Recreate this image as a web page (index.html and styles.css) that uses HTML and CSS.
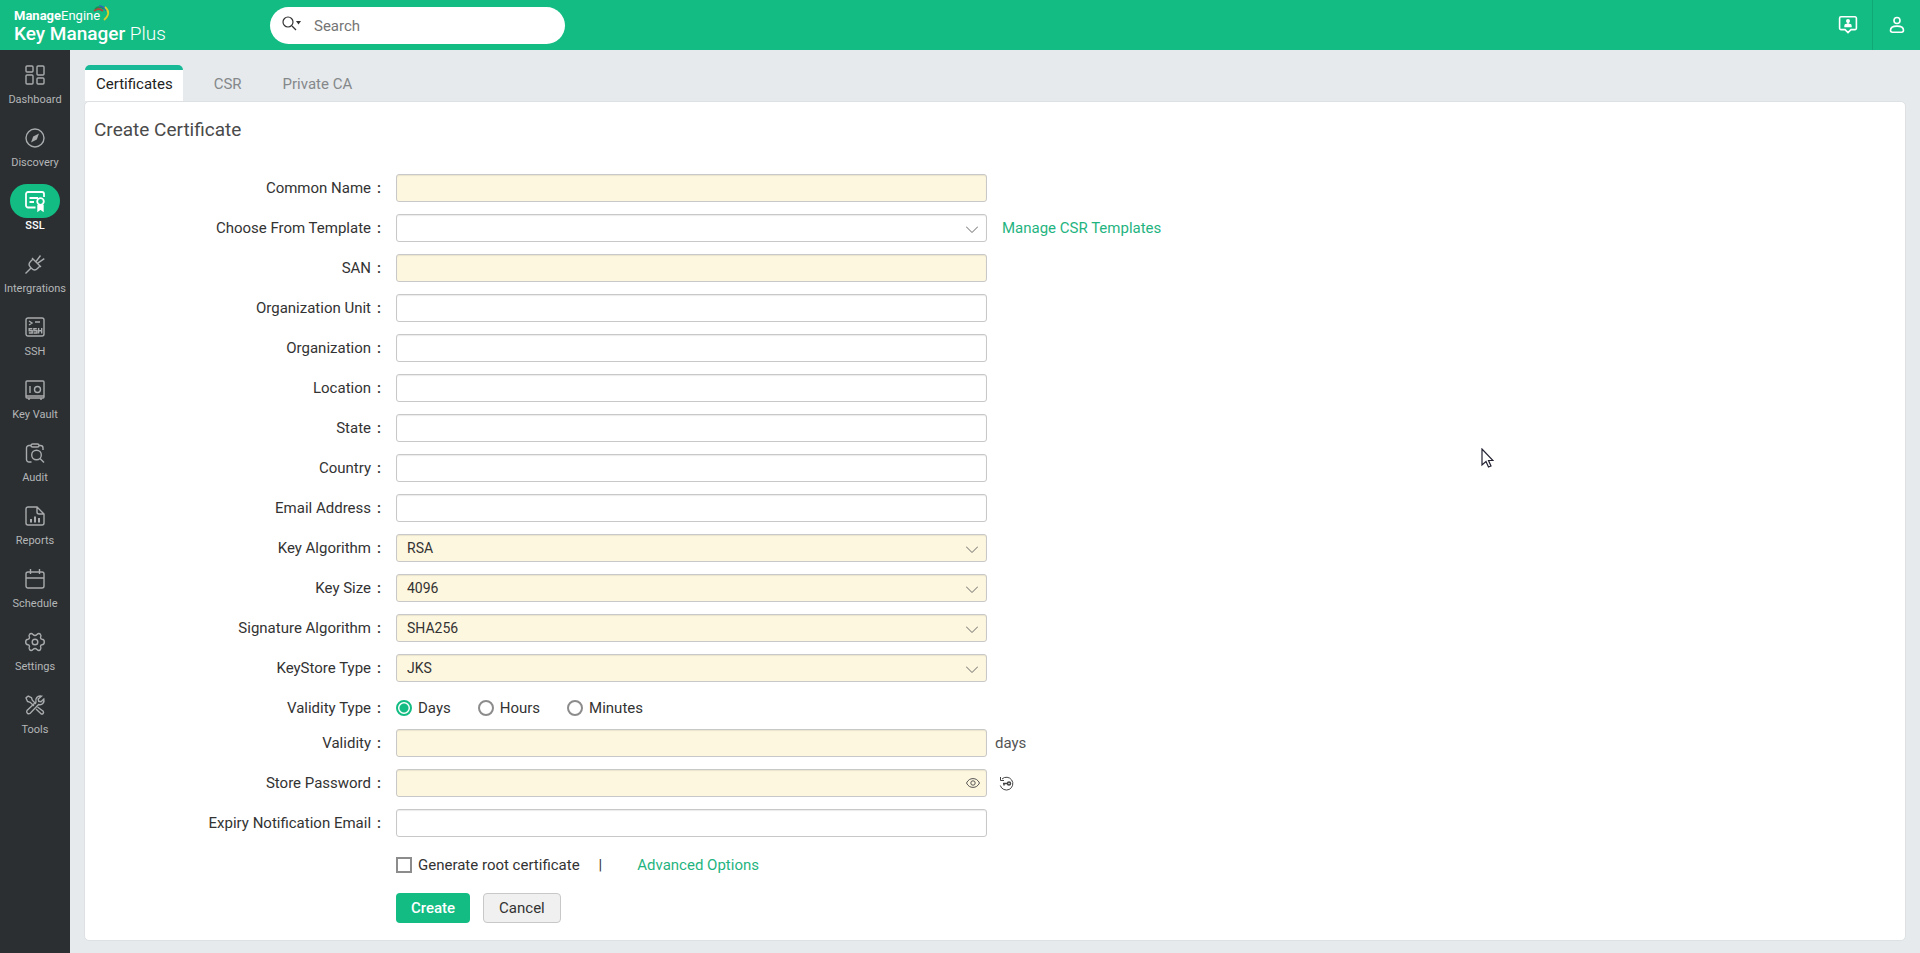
FILE: index.html
```html
<!DOCTYPE html>
<html lang="en">
<head>
  <meta charset="UTF-8">
  <meta name="viewport" content="width=device-width, initial-scale=1.0">
  <title>Key Manager Plus</title>
  <link rel="stylesheet" href="styles.css">
</head>
<body>
  <header class="topbar">
    <a href="#" class="brand">
      <span class="brand-top"><b>Manage</b>Engine
        <svg class="swoosh" viewBox="0 0 18 16" width="18" height="16" fill="none">
          <path d="M2 6 Q6 2 11 6" stroke="#b5423c" stroke-width="1.8"/>
          <path d="M3 4 Q7 0 12 4" stroke="#1f8a4c" stroke-width="1.5"/>
          <path d="M7 1 Q12 1 14 6" stroke="#2a6fb5" stroke-width="1.5"/>
          <path d="M13 2 Q20 8 12 15" stroke="#d9d02a" stroke-width="1.8"/>
        </svg>
      </span>
      <span class="brand-name"><b>Key Manager</b> Plus</span>
    </a>
    <form class="search">
      <button type="button" class="search-type" aria-label="Search type">
        <svg viewBox="0 0 20 16" width="20" height="16">
          <circle cx="6" cy="6" r="5" fill="none" stroke="#333" stroke-width="1.2"/>
          <path d="M10 10 L14 14" stroke="#333" stroke-width="1.3"/>
          <path d="M14 5 h5 l-2.5 3.5z" fill="#333"/>
        </svg>
      </button>
      <input type="text" placeholder="Search" aria-label="Search">
    </form>
    <div class="top-actions">
      <button type="button" aria-label="Support" class="action">
        <svg viewBox="0 0 20 20" width="20" height="20" fill="none" stroke="#fff" stroke-width="1.6">
          <path d="M3 1.800h14a1.400 1.400 0 0 1 1.400 1.400v10a1.400 1.400 0 0 1-1.400 1.400h-4l-3 3-3-3H3a1.400 1.400 0 0 1-1.400-1.400v-10A1.400 1.400 0 0 1 3 1.800z"/>
          <circle cx="10" cy="6" r="2" fill="#fff" stroke="none"/>
          <path d="M9.300 7h1.400v2h-1.400zM6.300 12.300v-1.500q0-2 2-2h3.400q2 0 2 2v1.500z" fill="#fff" stroke="none"/>
        </svg>
      </button>
      <button type="button" aria-label="Account" class="action account">
        <svg viewBox="0 0 16 18" width="16" height="18" fill="none" stroke="#fff" stroke-width="1.6">
          <circle cx="8" cy="4.500" r="3"/>
          <path d="M1.500 14.300c0-2.600 2.800-4.200 6.500-4.200s6.500 1.600 6.500 4.200c0 1.400-.6 1.900-1.900 1.900H3.400c-1.300 0-1.900-.5-1.900-1.900z"/>
        </svg>
      </button>
    </div>
  </header>

  <div class="layout">
    <nav class="sidebar">
      <a href="#" class="nav-item">
        <span class="nav-icon"><svg viewBox="0 0 20 20">
          <rect x="1" y="1" width="7" height="6" rx="1"/><rect x="12" y="1" width="7" height="9" rx="1"/>
          <rect x="1" y="10" width="7" height="9" rx="1"/><rect x="12" y="13" width="7" height="6" rx="1"/>
        </svg></span>Dashboard
      </a>
      <a href="#" class="nav-item">
        <span class="nav-icon"><svg viewBox="0 0 20 20">
          <circle cx="10" cy="10" r="9"/><path d="M14 5.500 L11.800 11.500 L6 14.500 L8.200 8.500z" fill="#a9abac" stroke="none"/>
        </svg></span>Discovery
      </a>
      <a href="#" class="nav-item active">
        <span class="nav-icon"><svg viewBox="0 0 20 20">
          <path d="M10.500 16.500H3a2 2 0 0 1-2-2V3a2 2 0 0 1 2-2h14a2 2 0 0 1 2 2v3M4.500 7h8.500M4.500 11h4.500"/>
          <circle cx="15.500" cy="10.500" r="3.300"/>
          <path d="M13.200 14v5.500l2.300-1.800 2.300 1.800V14" fill="#fff"/>
        </svg></span>SSL
      </a>
      <a href="#" class="nav-item">
        <span class="nav-icon"><svg viewBox="0 0 20 20">
          <path d="M7 4l9 9M8 5L5.500 7.500c-1.800 1.800-1.800 4 0 5.800l1.200 1.200c1.800 1.800 4 1.800 5.800 0L15 12M.5 19.500l5.300-5.300M11 7.500l4.500-6M12.800 9.200l6.500-4.500"/>
        </svg></span>Intergrations
      </a>
      <a href="#" class="nav-item">
        <span class="nav-icon"><svg viewBox="0 0 20 20">
          <rect x="1" y="1" width="18" height="18" rx="2"/><path d="M4 4l3 2-3 2M10 5h5"/>
          <path d="M7.300 11.800H4.200v2h3v2.200H3.800M11.800 11.800H8.900v2h3v2.200H8.500M13.600 11v5.600M16.700 11v5.600M13.600 13.800h3"/>
        </svg></span>SSH
      </a>
      <a href="#" class="nav-item">
        <span class="nav-icon"><svg viewBox="0 0 20 20">
          <rect x="1" y="1" width="18" height="17" rx="1"/><circle cx="12.500" cy="9.500" r="3"/><path d="M5 6v7M4 18v2M16 18v2M1 16h18"/>
        </svg></span>Key Vault
      </a>
      <a href="#" class="nav-item">
        <span class="nav-icon"><svg viewBox="0 0 20 20">
          <path d="M6.500 19H4a2.500 2.500 0 0 1-2.500-2.500V5A2.500 2.500 0 0 1 4 2.500h2M14 2.500h1.500A2.500 2.500 0 0 1 18 5v2"/>
          <rect x="6" y="1" width="8" height="3" rx="1.500"/><circle cx="11.500" cy="12" r="4.800"/><path d="M15 15.500l4 4"/>
        </svg></span>Audit
      </a>
      <a href="#" class="nav-item">
        <span class="nav-icon"><svg viewBox="0 0 20 20">
          <path d="M12 1H3a2 2 0 0 0-2 2v14a2 2 0 0 0 2 2h14a2 2 0 0 0 2-2V8zM12 1v5a2 2 0 0 0 2 2h5"/>
          <path d="M6 13v3.500M10 10.500v6M14 12v4.500" stroke-width="2"/>
        </svg></span>Reports
      </a>
      <a href="#" class="nav-item">
        <span class="nav-icon"><svg viewBox="0 0 20 20">
          <rect x="1" y="3" width="18" height="16" rx="2"/><path d="M1 9h18M5.500 0v5M14.500 0v5"/>
        </svg></span>Schedule
      </a>
      <a href="#" class="nav-item">
        <span class="nav-icon"><svg viewBox="0 0 20 20">
          <circle cx="10" cy="10" r="2.800"/>
          <path d="M8 2.500Q10 4.500 12 2.500 14 .5 15.500 2.500 16.500 3.500 15.500 5.500 15.500 7 17 7.200 19.300 7.300 19.300 10T17 12.800Q15.500 13 15.500 14.500 16.500 16.500 15.500 17.500 14 19.500 12 17.500 10 15.500 8 17.500 6 19.500 4.500 17.500 3.500 16.500 4.500 14.500 4.500 13 3 12.800.7 12.700.7 10T3 7.200Q4.500 7 4.500 5.500 3.500 3.500 4.500 2.500 6 .5 8 2.500z"/>
        </svg></span>Settings
      </a>
      <a href="#" class="nav-item">
        <span class="nav-icon"><svg viewBox="0 0 20 20">
          <path d="M3 1L1 3l1.500 3.500 2.700.8L9 11M3 1l3.500 1.700.8 2.500L11 9"/>
          <path d="M12.500 12l5.700 4.300a1.700 1.700 0 0 1-2.200 2.500L11 14"/>
          <path d="M16.500 1.200C12.500.3 9.800 3.500 11 7L2 15.500a2.200 2.200 0 0 0 3 3l8.500-9c3.500 1 6.300-1.700 5.300-5.500L16 6.800l-2.300-.5-.5-2.300z"/>
        </svg></span>Tools
      </a>
    </nav>

    <main class="content">
      <div class="tabs">
        <a href="#" class="tab current">Certificates</a>
        <a href="#" class="tab">CSR</a>
        <a href="#" class="tab">Private CA</a>
      </div>

      <section class="panel">
        <h1>Create Certificate</h1>
        <form class="cert-form">
          <div class="row">
            <label for="cn">Common Name</label>
            <input type="text" id="cn" class="field required">
          </div>
          <div class="row">
            <label for="template">Choose From Template</label>
            <div class="select-box">
              <select id="template" class="field"><option></option></select>
              <svg class="arrow" viewBox="0 0 12 7"><path d="M0 .5l6 6 6-6"/></svg>
            </div>
            <a href="#" class="link">Manage CSR Templates</a>
          </div>
          <div class="row">
            <label for="san">SAN</label>
            <input type="text" id="san" class="field required">
          </div>
          <div class="row">
            <label for="ou">Organization Unit</label>
            <input type="text" id="ou" class="field">
          </div>
          <div class="row">
            <label for="org">Organization</label>
            <input type="text" id="org" class="field">
          </div>
          <div class="row">
            <label for="location">Location</label>
            <input type="text" id="location" class="field">
          </div>
          <div class="row">
            <label for="state">State</label>
            <input type="text" id="state" class="field">
          </div>
          <div class="row">
            <label for="country">Country</label>
            <input type="text" id="country" class="field">
          </div>
          <div class="row">
            <label for="email">Email Address</label>
            <input type="text" id="email" class="field">
          </div>
          <div class="row">
            <label for="keyalg">Key Algorithm</label>
            <div class="select-box">
              <select id="keyalg" class="field required"><option>RSA</option></select>
              <svg class="arrow" viewBox="0 0 12 7"><path d="M0 .5l6 6 6-6"/></svg>
            </div>
          </div>
          <div class="row">
            <label for="keysize">Key Size</label>
            <div class="select-box">
              <select id="keysize" class="field required"><option>4096</option></select>
              <svg class="arrow" viewBox="0 0 12 7"><path d="M0 .5l6 6 6-6"/></svg>
            </div>
          </div>
          <div class="row">
            <label for="sigalg">Signature Algorithm</label>
            <div class="select-box">
              <select id="sigalg" class="field required"><option>SHA256</option></select>
              <svg class="arrow" viewBox="0 0 12 7"><path d="M0 .5l6 6 6-6"/></svg>
            </div>
          </div>
          <div class="row">
            <label for="storetype">KeyStore Type</label>
            <div class="select-box">
              <select id="storetype" class="field required"><option>JKS</option></select>
              <svg class="arrow" viewBox="0 0 12 7"><path d="M0 .5l6 6 6-6"/></svg>
            </div>
          </div>
          <div class="row radio-row" role="radiogroup" aria-labelledby="vtype">
            <span class="row-label" id="vtype">Validity Type</span>
            <div class="choices">
              <label class="choice"><input type="radio" name="vtype" checked>Days</label>
              <label class="choice"><input type="radio" name="vtype">Hours</label>
              <label class="choice"><input type="radio" name="vtype">Minutes</label>
            </div>
          </div>
          <div class="row">
            <label for="validity">Validity</label>
            <input type="text" id="validity" class="field required">
            <span class="unit">days</span>
          </div>
          <div class="row">
            <label for="password">Store Password</label>
            <div class="password-box">
              <input type="password" id="password" class="field required">
              <button type="button" class="eye" aria-label="Show password">
                <svg viewBox="0 0 14 10" width="14" height="10" fill="none" stroke="#555">
                  <path d="M.5 5C2 2 4.200.6 7 .6S12 2 13.500 5C12 8 9.800 9.400 7 9.400S2 8 .5 5z"/>
                  <circle cx="7" cy="5" r="2.200"/>
                </svg>
              </button>
            </div>
            <button type="button" class="generate" aria-label="Generate password">
              <svg viewBox="0 0 15 15" width="15" height="15" fill="none" stroke="#444">
                <path d="M3 3A6.400 6.400 0 1 1 1.300 9.500M1.500 1v3.500H5"/>
                <circle cx="10" cy="7.500" r="1.500" stroke-width="1.500"/><path d="M8.500 7.500H4M5 7.500v2" stroke-width="1.500"/>
              </svg>
            </button>
          </div>
          <div class="row">
            <label for="expiry">Expiry Notification Email</label>
            <input type="text" id="expiry" class="field">
          </div>
          <div class="options">
            <label class="choice"><input type="checkbox">Generate root certificate</label>
            <span>|</span>
            <a href="#" class="link">Advanced Options</a>
          </div>
          <div class="buttons">
            <button type="submit" class="btn create">Create</button>
            <button type="button" class="btn cancel">Cancel</button>
          </div>
        </form>
      </section>
    </main>
  </div>

  <svg class="cursor" viewBox="0 0 13 20" width="13" height="20">
    <path d="M1 1v16l4-3.500 2.500 5.500 2.500-1-2.500-5.500H12z" fill="#fff" stroke="#223" stroke-width="1.200"/>
  </svg>
</body>
</html>
```

FILE: styles.css
```css
:root {
  --green: #12bc83;
  --dark: #2b2f32;
  --page: #e6eaed;
  --border: #c8c8c8;
  --required: #fef7df;
}

* {
  box-sizing: border-box;
}

body {
  margin: 0;
  min-height: 100vh;
  display: flex;
  flex-direction: column;
  font-family: Roboto, sans-serif;
  font-size: 15px;
  line-height: 20px;
  color: #333;
  background: var(--page);
}

a {
  text-decoration: none;
}

button {
  font-family: inherit;
  padding: 0;
  border: none;
  background: none;
  cursor: pointer;
}

.topbar {
  height: 50px;
  display: flex;
  align-items: center;
  background: var(--green);
}

.brand {
  width: 270px;
  padding: 4px 0 0 14px;
  color: #fff;
}

.brand-top,
.brand-name {
  display: block;
}

.brand-top {
  position: relative;
  width: 96px;
  font-size: 13px;
  line-height: 14px;
}

.swoosh {
  position: absolute;
  right: 0;
  top: -4px;
}

.brand-name {
  font-size: 19px;
  line-height: 22px;
  font-weight: 300;
}

.brand-name b {
  font-weight: 500;
}

.search {
  width: 295px;
  height: 37px;
  display: flex;
  align-items: center;
  gap: 12px;
  padding: 0 12px;
  border-radius: 19px;
  background: #fff;
}

.search input {
  flex: 1;
  min-width: 0;
  border: none;
  outline: none;
  padding: 1px 0 0;
  font: inherit;
}

.search input::placeholder {
  color: #757575;
}

.top-actions {
  margin-left: auto;
  display: flex;
  align-self: stretch;
}

.action {
  width: 48px;
  display: flex;
  align-items: center;
  justify-content: center;
}

.action.account {
  border-left: 1px solid #10a875;
}

.layout {
  flex: 1;
  display: flex;
}

.sidebar {
  flex: none;
  width: 70px;
  padding-top: 8px;
  display: flex;
  flex-direction: column;
  gap: 13px;
  background: var(--dark);
}

.nav-item {
  display: flex;
  flex-direction: column;
  align-items: center;
  font-size: 11px;
  line-height: 16px;
  color: #b4b6b7;
}

.nav-icon {
  width: 50px;
  height: 34px;
  display: flex;
  align-items: center;
  justify-content: center;
  border-radius: 17px;
}

.nav-icon svg {
  width: 20px;
  height: 20px;
  fill: none;
  stroke: #a9abac;
  stroke-width: 1.4;
  overflow: visible;
}

.nav-item.active {
  color: #fff;
  font-weight: 500;
}

.active .nav-icon {
  background: var(--green);
}

.active .nav-icon svg {
  stroke: #fff;
  stroke-width: 1.8;
}

.content {
  flex: 1;
  display: flex;
  flex-direction: column;
  padding: 15px 14px 12px;
}

.tabs {
  display: flex;
}

.tab {
  height: 36px;
  padding: 9px 16px 0;
  color: #85888a;
}

.tab.current {
  padding: 4px 10px 0 11px;
  margin: 0 15px 0 1px;
  border-top: 5px solid #17b997;
  border-radius: 5px 5px 0 0;
  background: #fff;
  color: #222;
}

.tab + .tab {
  margin-right: 9px;
}

.panel {
  flex: 1;
  border: 1px solid #dde1e3;
  border-radius: 5px;
  padding: 17px 9px 16px;
  background: #fff;
}

h1 {
  margin: 0 0 33px;
  font-size: 19px;
  line-height: 22px;
  font-weight: 400;
  color: #4a4a4a;
}

.cert-form {
  display: flex;
  flex-direction: column;
  gap: 12px;
}

.row {
  display: grid;
  grid-template-columns: 287px minmax(200px, 591px) auto;
  justify-content: start;
  align-items: center;
  column-gap: 15px;
}

.row > label,
.row-label {
  text-align: right;
}

.row > label::after,
.row-label::after {
  content: ":";
  margin-left: 6px;
  font-weight: 500;
}

.field {
  width: 100%;
  height: 28px;
  display: block;
  border: 1px solid var(--border);
  border-radius: 3px;
  padding: 0 10px;
  font-family: inherit;
  font-size: 14px;
  color: #333;
  background: #fff;
  box-shadow: inset 0 1px 1px rgba(0, 0, 0, 0.08);
  appearance: none;
}

select.field {
  padding-bottom: 1px;
}

.field.required {
  background: var(--required);
}

.select-box,
.password-box {
  position: relative;
}

.arrow {
  position: absolute;
  right: 9px;
  top: 12px;
  width: 12px;
  height: 7px;
  fill: none;
  stroke: #666;
  pointer-events: none;
}

.eye {
  position: absolute;
  right: 7px;
  top: 9px;
  display: flex;
}

.generate {
  display: flex;
  margin-left: -3px;
}

.link {
  color: #1fb47f;
}

.unit {
  margin-left: -7px;
  color: #555;
}

.radio-row {
  padding: 4px 0 0;
  margin-bottom: -1px;
}

.choices {
  display: flex;
  gap: 27px;
}

.choice {
  display: flex;
  align-items: center;
  gap: 6px;
}

.choice input {
  appearance: none;
  width: 16px;
  height: 16px;
  margin: 0;
  border: 2px solid #8c8c8c;
  background: #fff;
}

.choice input[type="radio"] {
  border-radius: 50%;
}

.choice input[type="radio"]:checked {
  border-color: var(--green);
  background: radial-gradient(circle, var(--green) 4px, #fff 5px);
}

.options,
.buttons {
  display: flex;
  align-items: center;
  padding-left: 302px;
}

.options {
  gap: 19px;
  padding-top: 6px;
}

.options .link {
  margin-left: 16px;
}

.buttons {
  gap: 13px;
  padding-top: 6px;
}

.btn {
  height: 30px;
  padding: 0 15px;
  border-radius: 4px;
  font-size: 15px;
}

.create {
  background: var(--green);
  color: #fff;
  font-weight: 500;
}

.cancel {
  border: 1px solid var(--border);
  background: #f0f0f0;
  color: #333;
}

.cursor {
  position: absolute;
  left: 1481px;
  top: 448px;
}
```
